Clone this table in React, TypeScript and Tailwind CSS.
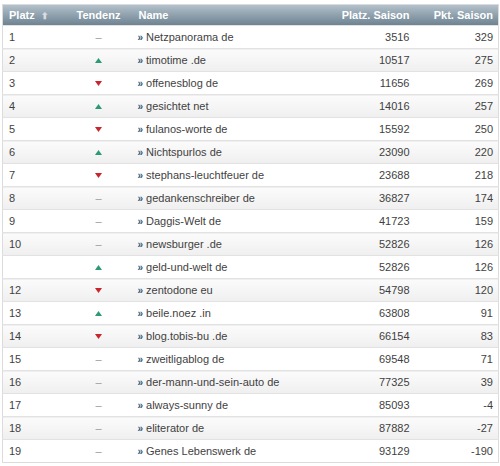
import { ReactNode } from "react";

type Trend = "up" | "down" | "same";

const ROWS: { platz: string; trend: Trend; name: string; saison: number; pkt: number }[] = [
  { platz: "1", trend: "same", name: "Netzpanorama de", saison: 3516, pkt: 329 },
  { platz: "2", trend: "up", name: "timotime .de", saison: 10517, pkt: 275 },
  { platz: "3", trend: "down", name: "offenesblog de", saison: 11656, pkt: 269 },
  { platz: "4", trend: "up", name: "gesichtet net", saison: 14016, pkt: 257 },
  { platz: "5", trend: "down", name: "fulanos-worte de", saison: 15592, pkt: 250 },
  { platz: "6", trend: "up", name: "Nichtspurlos de", saison: 23090, pkt: 220 },
  { platz: "7", trend: "down", name: "stephans-leuchtfeuer de", saison: 23688, pkt: 218 },
  { platz: "8", trend: "same", name: "gedankenschreiber de", saison: 36827, pkt: 174 },
  { platz: "9", trend: "same", name: "Daggis-Welt de", saison: 41723, pkt: 159 },
  { platz: "10", trend: "same", name: "newsburger .de", saison: 52826, pkt: 126 },
  { platz: "", trend: "up", name: "geld-und-welt de", saison: 52826, pkt: 126 },
  { platz: "12", trend: "down", name: "zentodone eu", saison: 54798, pkt: 120 },
  { platz: "13", trend: "up", name: "beile.noez .in", saison: 63808, pkt: 91 },
  { platz: "14", trend: "down", name: "blog.tobis-bu .de", saison: 66154, pkt: 83 },
  { platz: "15", trend: "same", name: "zweitligablog de", saison: 69548, pkt: 71 },
  { platz: "16", trend: "same", name: "der-mann-und-sein-auto de", saison: 77325, pkt: 39 },
  { platz: "17", trend: "same", name: "always-sunny de", saison: 85093, pkt: -4 },
  { platz: "18", trend: "same", name: "eliterator de", saison: 87882, pkt: -27 },
  { platz: "19", trend: "same", name: "Genes Lebenswerk de", saison: 93129, pkt: -190 },
];

function TrendIcon({ trend }: { trend: Trend }) {
  if (trend === "up")
    return (
      <svg width="7" height="5" viewBox="0 0 7 5" className="inline-block">
        <polygon points="3.5,0 7,5 0,5" fill="#2e9a72" />
      </svg>
    );
  if (trend === "down")
    return (
      <svg width="7" height="5" viewBox="0 0 7 5" className="inline-block">
        <polygon points="0,0 7,0 3.5,5" fill="#c9252c" />
      </svg>
    );
  return <span className="text-[#9a9a9a]">–</span>;
}

function Th({ children, className = "" }: { children: ReactNode; className?: string }) {
  return <th className={`h-[21px] font-bold text-white text-[11px] ${className}`}>{children}</th>;
}

export default function App() {
  return (
    <div className="w-[500px] h-[466px] bg-white pt-[4px] px-[2px] font-['Liberation_Sans',Arial,sans-serif]">
      <table className="w-[496px] table-fixed border-collapse border border-[#dcdcdc] text-[11px] text-[#3f3f3f]">
        <colgroup>
          <col className="w-[62px]" />
          <col className="w-[72px]" />
          <col className="w-[198px]" />
          <col className="w-[81px]" />
          <col className="w-[83px]" />
        </colgroup>
        <thead>
          <tr className="bg-gradient-to-b from-[#b3c1cb] to-[#6b808f]">
            <Th className="text-left pl-[6px]">
              Platz
              <span className="ml-[6px] text-[9px] text-[#d7dde2]">⬆</span>
            </Th>
            <Th className="text-center pr-[4px]">Tendenz</Th>
            <Th className="text-left pl-[2px]">Name</Th>
            <Th className="text-right pr-[6px]">Platz. Saison</Th>
            <Th className="text-right pr-[5px]">Pkt. Saison</Th>
          </tr>
        </thead>
        <tbody>
          {ROWS.map((r, i) => (
            <tr
              key={i}
              className={`h-[23px] border-t border-[#e2e2e2] ${
                i % 2 === 1 ? "bg-gradient-to-b from-[#fbfbfb] to-[#efefef]" : "bg-white"
              }`}
            >
              <td className="pl-[6px]">{r.platz}</td>
              <td className="text-center pr-[4px]">
                <TrendIcon trend={r.trend} />
              </td>
              <td className="pl-[1px] whitespace-nowrap">
                <span className="text-[#2d5878] font-bold text-[10px] mr-[3px]">»</span>
                {r.name}
              </td>
              <td className="text-right pr-[6px]">{r.saison}</td>
              <td className="text-right pr-[5px]">{r.pkt}</td>
            </tr>
          ))}
        </tbody>
      </table>
    </div>
  );
}
